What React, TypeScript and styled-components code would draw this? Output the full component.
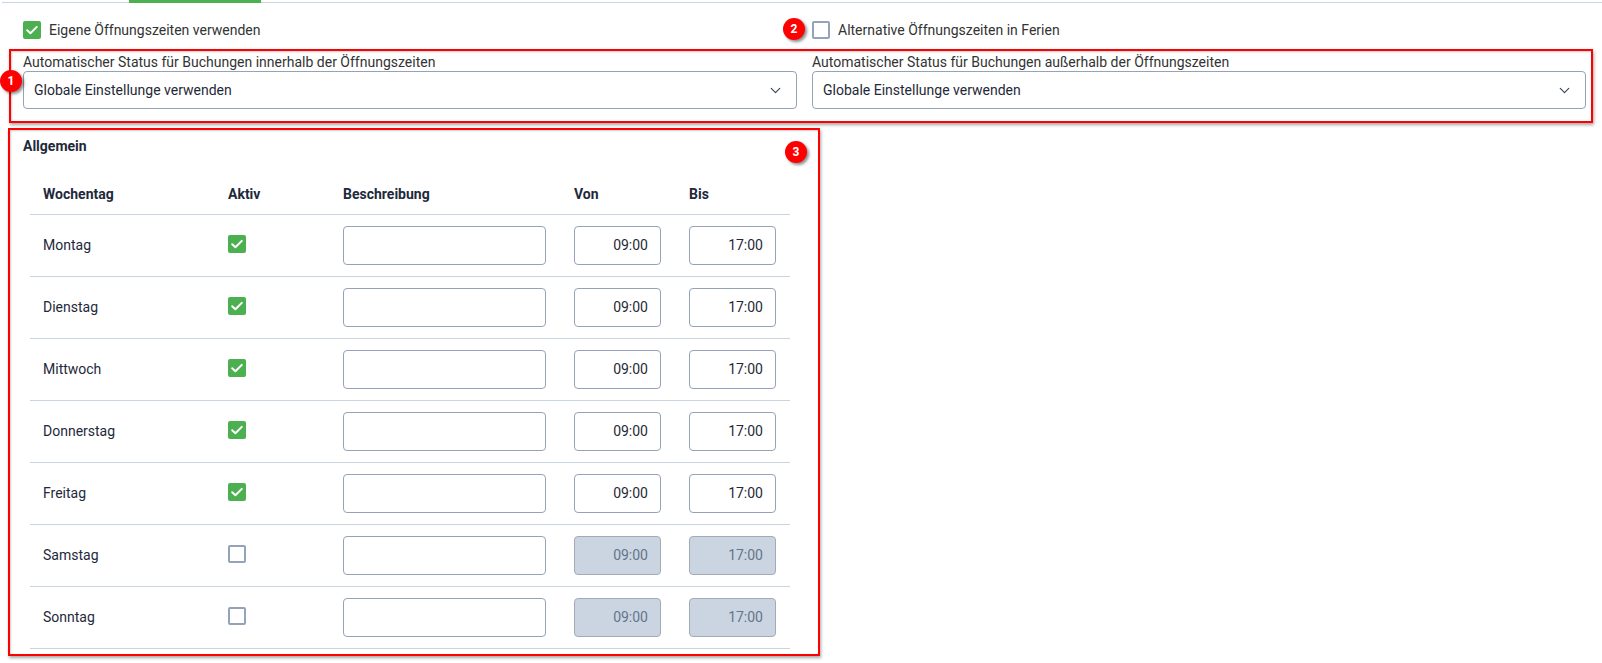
import React from "react";
import styled, {createGlobalStyle} from "styled-components";
import {ChevronDown} from "lucide-react";

const GlobalStyle = createGlobalStyle`
  html, body {
    margin: 0;
    padding: 0;
    background: #fff;
  }
  body {
    font-family: Roboto, "Liberation Sans", Arial, sans-serif;
    font-size: 14px;
    color: #333;
  }
`;

const Page = styled.div`
  width: 1602px;
  padding: 0 9px 8px 8px;
  box-sizing: border-box;
`;

const TabStrip = styled.div`
  display: flex;
  height: 3px;
  margin-left: -6px;
  margin-right: -9px;
  box-shadow: inset 0 -1px #cbd5e1;
`;
const ActiveTab = styled.div`
  width: 132px;
  height: 3px;
  margin-left: 127px;
  background: #4caf50;
`;

const TopRow = styled.div`
  display: grid;
  grid-template-columns: 1fr 1fr;
  column-gap: 15px;
  margin-top: 18px;
  padding: 0 7px 0 15px;
`;

const CheckField = styled.label`
  position: relative;
  display: flex;
  align-items: center;
  gap: 8px;
  height: 18px;
  line-height: 18px;
  color: #333;
  cursor: pointer;
`;

const Box = styled.span<{$checked: boolean}>`
  display: inline-flex;
  align-items: center;
  justify-content: center;
  flex-shrink: 0;
  width: 18px;
  height: 18px;
  box-sizing: border-box;
  border-radius: 2px;
  background: ${p => (p.$checked ? "#4caf50" : "#fff")};
  border: ${p => (p.$checked ? "none" : "2px solid #94a3b8")};
`;

const Frame = styled.div<{$width?: string; $pad: string; $ml?: string}>`
  position: relative;
  border: 2px solid #ff0000;
  box-shadow: 1px 2px 3px rgba(0, 0, 0, 0.35), inset 1px 1px 2px rgba(0, 0, 0, 0.2);
  padding: ${p => p.$pad};
  width: ${p => p.$width || "auto"};
  margin-left: ${p => p.$ml || "0"};
  box-sizing: border-box;
`;

const Badge = styled.span<{$left: number; $top: number}>`
  position: absolute;
  left: ${p => p.$left}px;
  top: ${p => p.$top}px;
  width: 22px;
  height: 22px;
  border-radius: 50%;
  background: #f00;
  color: #fff;
  font-weight: 700;
  font-size: 12px;
  line-height: 22px;
  text-align: center;
  box-shadow: 2px 2px 3px rgba(0, 0, 0, 0.45);
  z-index: 2;
`;

const SelectGrid = styled.div`
  display: grid;
  grid-template-columns: 1fr 1fr;
  column-gap: 15px;
`;

const FieldLabel = styled.div`
  height: 16px;
  line-height: 16px;
  color: #333;
  margin-bottom: 1px;
  white-space: nowrap;
`;

const SelectBox = styled.div`
  display: flex;
  align-items: center;
  justify-content: space-between;
  height: 38px;
  box-sizing: border-box;
  border: 1px solid #94a3b8;
  border-radius: 4px;
  padding: 0 12px 0 10px;
  color: #1f2937;
  background: #fff;
`;

const CardTitle = styled.div`
  font-weight: 700;
  color: #1e293b;
  line-height: 16px;
  margin: 0 0 20px -7px;
`;

const Table = styled.table`
  border-collapse: collapse;
  table-layout: fixed;
  width: 760px;
`;

const Th = styled.th<{$w: number}>`
  width: ${p => p.$w}px;
  box-sizing: border-box;
  height: 40px;
  padding: 0 13px;
  text-align: left;
  font-weight: 700;
  color: #1e293b;
  border-bottom: 1px solid #cbd5e1;
  vertical-align: middle;
`;

const Td = styled.td`
  height: 61px;
  padding: 0 13px;
  color: #1e293b;
  border-bottom: 1px solid #cbd5e1;
  vertical-align: middle;
`;

const TextInput = styled.div<{$w: number; $disabled?: boolean}>`
  width: ${p => p.$w}px;
  height: 39px;
  box-sizing: border-box;
  border: 1px solid ${p => (p.$disabled ? "#a3abb7" : "#94a3b8")};
  border-radius: 4px;
  background: ${p => (p.$disabled ? "#cbd5e1" : "#fff")};
  color: ${p => (p.$disabled ? "#64748b" : "#1f2937")};
  display: flex;
  align-items: center;
  justify-content: flex-end;
  padding-right: 12px;
`;

function Check({checked}: {checked: boolean}) {
  return (
    <Box $checked={checked}>
      {checked && (
        <svg width="18" height="18" viewBox="0 0 18 18">
          <polyline
            points="4.2 9.3 7.4 12.3 13.8 5.9"
            fill="none"
            stroke="#fff"
            strokeWidth="2"
            strokeLinecap="round"
            strokeLinejoin="round"
          />
        </svg>
      )}
    </Box>
  );
}

const days = [
  {name: "Montag", active: true},
  {name: "Dienstag", active: true},
  {name: "Mittwoch", active: true},
  {name: "Donnerstag", active: true},
  {name: "Freitag", active: true},
  {name: "Samstag", active: false},
  {name: "Sonntag", active: false},
];

export default function App() {
  return (
    <>
      <GlobalStyle />
      <Page>
        <TabStrip>
          <ActiveTab />
        </TabStrip>

        <TopRow>
          <CheckField>
            <Check checked />
            Eigene Öffnungszeiten verwenden
          </CheckField>
          <CheckField>
            <Badge $left={-29} $top={-3}>2</Badge>
            <Check checked={false} />
            Alternative Öffnungszeiten in Ferien
          </CheckField>
        </TopRow>

        <Frame $pad="3px 5px 12px 12px" $ml="1px" style={{marginTop: 10}}>
          <Badge $left={-11} $top={19}>1</Badge>
          <SelectGrid>
            <div>
              <FieldLabel>Automatischer Status für Buchungen innerhalb der Öffnungszeiten</FieldLabel>
              <SelectBox>
                Globale Einstellunge verwenden
                <ChevronDown size={17} color="#334155" strokeWidth={1.6} />
              </SelectBox>
            </div>
            <div>
              <FieldLabel>Automatischer Status für Buchungen außerhalb der Öffnungszeiten</FieldLabel>
              <SelectBox>
                Globale Einstellunge verwenden
                <ChevronDown size={17} color="#334155" strokeWidth={1.6} />
              </SelectBox>
            </div>
          </SelectGrid>
        </Frame>

        <Frame $pad="8px 28px 5px 20px" $width="812px" style={{marginTop: 5}}>
          <Badge $left={775} $top={11}>3</Badge>
          <CardTitle>Allgemein</CardTitle>
          <Table>
            <thead>
              <tr>
                <Th $w={185}>Wochentag</Th>
                <Th $w={115}>Aktiv</Th>
                <Th $w={231}>Beschreibung</Th>
                <Th $w={115}>Von</Th>
                <Th $w={114}>Bis</Th>
              </tr>
            </thead>
            <tbody>
              {days.map(d => (
                <tr key={d.name}>
                  <Td>{d.name}</Td>
                  <Td>
                    <Check checked={d.active} />
                  </Td>
                  <Td>
                    <TextInput $w={203} />
                  </Td>
                  <Td>
                    <TextInput $w={87} $disabled={!d.active}>09:00</TextInput>
                  </Td>
                  <Td>
                    <TextInput $w={87} $disabled={!d.active}>17:00</TextInput>
                  </Td>
                </tr>
              ))}
            </tbody>
          </Table>
        </Frame>
      </Page>
    </>
  );
}
